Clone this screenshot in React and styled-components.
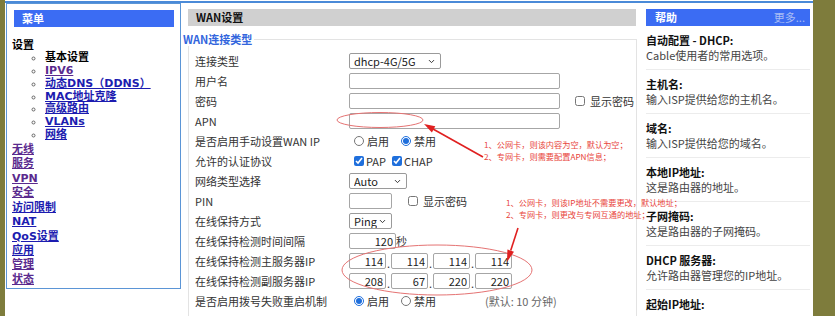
import React from "react";
import styled, { createGlobalStyle } from "styled-components";
import { ChevronDown } from "lucide-react";

const Global = createGlobalStyle`
  html, body { margin: 0; padding: 0; }
  body {
    background: #7e7c3c;
    overflow: hidden;
    font-family: "Noto Sans CJK SC", "Noto Sans", sans-serif;
  }
`;

const Page = styled.div`
  position: relative;
  width: 808px;
  height: 316px;
  margin-left: 5px;
  background: linear-gradient(#fff 0 1px, #4a8ad8 1px 3px, #fff 3px);
  display: flex;
  align-items: flex-start;
`;

const MenuBox = styled.div`
  box-sizing: border-box;
  width: 175px;
  height: 286px;
  margin: 3px 0 0 1px;
  border: 1px solid #5b95d6;
  padding: 6px 6px 0 5px;
`;

const PanelHeader = styled.div`
  height: 17px;
  line-height: 17px;
  background: ${(p) => p.$bg || "#3b6cf3"};
  color: ${(p) => p.$color || "#fff"};
  font-size: 11px;
  font-weight: bold;
  padding: 0 ${(p) => p.$padR || 0}px 0 ${(p) => p.$padL || 8}px;
  margin-left: ${(p) => p.$ml || 0}px;
  width: ${(p) => (p.$w ? `${p.$w}px` : "auto")};
  display: flex;
  justify-content: space-between;
`;

const MoreLink = styled.span`
  font-weight: normal;
  color: #a9bdf3;
  font-size: 11px;
`;

const MenuHeading = styled.div`
  margin-top: 12px;
  font-family: "DejaVu Sans", "Noto Sans CJK SC", sans-serif;
  font-weight: bold;
  font-size: 11px;
  line-height: 13px;
  color: #000;
`;

const SubList = styled.ul`
  margin: 0;
  padding: 0 0 0 33px;
  list-style: circle;
  font-family: "DejaVu Sans", "Noto Sans CJK SC", sans-serif;
  font-weight: bold;
  font-size: 11px;
  line-height: 12.85px;
  li::marker { color: #666; }
`;

const TopList = styled.div`
  display: flex;
  flex-direction: column;
  align-items: flex-start;
  margin-top: 1px;
  font-family: "DejaVu Sans", "Noto Sans CJK SC", sans-serif;
  font-weight: bold;
  font-size: 11px;
  line-height: 14.44px;
`;

const MenuLink = styled.a`
  color: ${(p) => (p.$current ? "#000" : p.$visited ? "#5a2a8e" : "#1c1cb0")};
  text-decoration: ${(p) => (p.$current ? "none" : "underline")};
`;

const Main = styled.div`
  width: 455px;
  margin-left: 1px;
  padding-top: 9px;
`;

const Fieldset = styled.fieldset`
  box-sizing: border-box;
  width: 449px;
  margin: 6px 0 0 6px;
  border: 1px solid #e3e3e3;
  padding: 5px 0 12px 6px;
  min-width: 0;
`;

const Legend = styled.legend`
  margin-left: -14px;
  padding: 0 2px;
  font-size: 11px;
  line-height: 14px;
  font-weight: bold;
  color: #3366dd;
`;

const Row = styled.div`
  display: grid;
  grid-template-columns: 154px auto;
  align-items: center;
  height: 20px;
  font-size: 11px;
  color: #333;
`;

const Controls = styled.div`
  display: flex;
  align-items: center;
`;

const SelectWrap = styled.span`
  position: relative;
  display: inline-flex;
  width: ${(p) => p.$w}px;
  height: 16px;
`;

const Select = styled.select`
  appearance: none;
  -webkit-appearance: none;
  box-sizing: border-box;
  width: 100%;
  height: 16px;
  font-size: 11px;
  line-height: 14px;
  font-family: "Noto Sans CJK SC", "Noto Sans", sans-serif;
  border: 1px solid #9a9a9a;
  border-radius: 2px;
  padding: 0 14px 0 4px;
  background: #fff;
  color: #222;
  outline: none;
`;

const Chevron = styled(ChevronDown)`
  position: absolute;
  right: 5px;
  top: 4px;
  pointer-events: none;
  color: #333;
`;

const TextInput = styled.input`
  box-sizing: border-box;
  width: ${(p) => p.$w}px;
  height: 16px;
  border: 1px solid #a6a6a6;
  border-radius: 2px;
  padding: 0 2px;
  font-size: 11px;
  font-family: "Noto Sans CJK SC", "Noto Sans", sans-serif;
  text-align: ${(p) => (p.$right ? "right" : "left")};
  color: #222;
  outline: none;
`;

const Check = styled.input`
  width: 10px;
  height: 10px;
  margin: 0 ${(p) => p.$mr ?? 3}px 0 ${(p) => p.$ml ?? 0}px;
  accent-color: #1f6fdc;
`;

const OptText = styled.span`
  color: #333;
  font-size: 11px;
  margin-right: ${(p) => p.$mr || 0}px;
`;

const Dot = styled.span`
  width: 5px;
  text-align: center;
  font-size: 11px;
  align-self: flex-end;
  line-height: 12px;
`;

const Hint = styled.span`
  color: #666;
  font-size: 11px;
  margin-left: ${(p) => p.$ml}px;
`;

const Help = styled.div`
  width: 164px;
  margin-left: 9px;
  padding-top: 9px;
`;

const HelpItem = styled.div`
  padding: 7px 0 6px;
  border-bottom: 1px solid #ececec;
  font-size: 11px;
  line-height: 15px;
`;

const HelpTitle = styled.div`
  font-weight: bold;
  color: #111;
`;

const HelpText = styled.div`
  color: #444;
`;

const Note = styled.div`
  position: absolute;
  left: ${(p) => p.$x}px;
  top: ${(p) => p.$y}px;
  color: #e8453c;
  font-size: 8.2px;
  line-height: 12px;
  white-space: nowrap;
`;

const Overlay = styled.svg`
  position: absolute;
  left: 0;
  top: 0;
  pointer-events: none;
`;

const subItems = [
  { t: "基本设置", current: true },
  { t: "IPV6", visited: true },
  { t: "动态DNS（DDNS）" },
  { t: "MAC地址克隆" },
  { t: "高级路由" },
  { t: "VLANs" },
  { t: "网络" },
];

const topItems = [
  { t: "无线", visited: true },
  { t: "服务", visited: true },
  { t: "VPN", visited: true },
  { t: "安全", visited: true },
  { t: "访问限制" },
  { t: "NAT" },
  { t: "QoS设置" },
  { t: "应用" },
  { t: "管理", visited: true },
  { t: "状态", visited: true },
];

const helpItems = [
  ["自动配置 - DHCP:", "Cable使用者的常用选项。"],
  ["主机名:", "输入ISP提供给您的主机名。"],
  ["域名:", "输入ISP提供给您的域名。"],
  ["本地IP地址:", "这是路由器的地址。"],
  ["子网掩码:", "这是路由器的子网掩码。"],
  ["DHCP 服务器:", "允许路由器管理您的IP地址。"],
  ["起始IP地址:", ""],
];

function Dropdown({ w, label }) {
  return (
    <SelectWrap $w={w}>
      <Select defaultValue="v">
        <option value="v">{label}</option>
      </Select>
      <Chevron size={9} strokeWidth={2.6} />
    </SelectWrap>
  );
}

function IpGroup({ values }) {
  return (
    <Controls>
      {values.map((v, i) => (
        <React.Fragment key={i}>
          {i > 0 && <Dot>.</Dot>}
          <TextInput $w={37} $right defaultValue={v} />
        </React.Fragment>
      ))}
    </Controls>
  );
}

export default function App() {
  return (
    <>
      <Global />
      <Page>
        <MenuBox>
          <PanelHeader $ml={2}>菜单</PanelHeader>
          <MenuHeading>设置</MenuHeading>
          <SubList>
            {subItems.map((it) => (
              <li key={it.t}>
                <MenuLink href="#" $current={it.current} $visited={it.visited}>
                  {it.t}
                </MenuLink>
              </li>
            ))}
          </SubList>
          <TopList>
            {topItems.map((it) => (
              <MenuLink key={it.t} href="#" $visited={it.visited}>
                {it.t}
              </MenuLink>
            ))}
          </TopList>
        </MenuBox>

        <Main>
          <PanelHeader $bg="#d0d0d0" $color="#111" $ml={6} $w={440}>
            WAN设置
          </PanelHeader>
          <Fieldset>
            <Legend>WAN连接类型</Legend>
            <Row>
              <span>连接类型</span>
              <Controls>
                <Dropdown w={92} label="dhcp-4G/5G" />
              </Controls>
            </Row>
            <Row>
              <span>用户名</span>
              <Controls>
                <TextInput $w={211} />
              </Controls>
            </Row>
            <Row>
              <span>密码</span>
              <Controls>
                <TextInput $w={211} type="password" />
                <Check type="checkbox" $ml={15} $mr={5} />
                <OptText>显示密码</OptText>
              </Controls>
            </Row>
            <Row>
              <span>APN</span>
              <Controls>
                <TextInput $w={211} />
              </Controls>
            </Row>
            <Row>
              <span>是否启用手动设置WAN IP</span>
              <Controls>
                <Check type="radio" name="wanip" $ml={5} />
                <OptText $mr={12}>启用</OptText>
                <Check type="radio" name="wanip" defaultChecked />
                <OptText>禁用</OptText>
              </Controls>
            </Row>
            <Row>
              <span>允许的认证协议</span>
              <Controls>
                <Check type="checkbox" defaultChecked $ml={5} $mr={2} />
                <OptText $mr={6}>PAP</OptText>
                <Check type="checkbox" defaultChecked $mr={2} />
                <OptText>CHAP</OptText>
              </Controls>
            </Row>
            <Row>
              <span>网络类型选择</span>
              <Controls>
                <Dropdown w={58} label="Auto" />
              </Controls>
            </Row>
            <Row>
              <span>PIN</span>
              <Controls>
                <TextInput $w={43} type="password" />
                <Check type="checkbox" $ml={16} $mr={5} />
                <OptText>显示密码</OptText>
              </Controls>
            </Row>
            <Row>
              <span>在线保持方式</span>
              <Controls>
                <Dropdown w={43} label="Ping" />
              </Controls>
            </Row>
            <Row>
              <span>在线保持检测时间间隔</span>
              <Controls>
                <TextInput $w={47} $right defaultValue="120" />
                <OptText>秒</OptText>
              </Controls>
            </Row>
            <Row>
              <span>在线保持检测主服务器IP</span>
              <IpGroup values={["114", "114", "114", "114"]} />
            </Row>
            <Row>
              <span>在线保持检测副服务器IP</span>
              <IpGroup values={["208", "67", "220", "220"]} />
            </Row>
            <Row>
              <span>是否启用拨号失败重启机制</span>
              <Controls>
                <Check type="radio" name="redial" defaultChecked $ml={5} />
                <OptText $mr={12}>启用</OptText>
                <Check type="radio" name="redial" />
                <OptText>禁用</OptText>
                <Hint $ml={49}>(默认: 10 分钟)</Hint>
              </Controls>
            </Row>
          </Fieldset>
        </Main>

        <Help>
          <PanelHeader $padL={9} $padR={5}>
            <span>帮助</span>
            <MoreLink>更多...</MoreLink>
          </PanelHeader>
          {helpItems.map(([t, d]) => (
            <HelpItem key={t}>
              <HelpTitle>{t}</HelpTitle>
              <HelpText>{d}</HelpText>
            </HelpItem>
          ))}
        </Help>

        <Note $x={479} $y={138}>
          1、公网卡，则该内容为空，默认为空；
          <br />
          2、专网卡，则需要配置APN信息；
        </Note>
        <Note $x={501} $y={196}>
          1、公网卡，则该IP地址不需要更改，默认地址；
          <br />
          2、专网卡，则更改与专网互通的地址；
        </Note>

        <Overlay width="808" height="316" viewBox="0 0 808 316">
          <ellipse cx="375" cy="120" rx="43" ry="7.5" fill="none" stroke="#e57373" strokeWidth="1" />
          <ellipse cx="432" cy="270" rx="95" ry="25" fill="none" stroke="#e57373" strokeWidth="1" />
          <line x1="478" y1="157" x2="428" y2="129" stroke="#e02020" strokeWidth="1.6" />
          <polygon points="419,124 430.3,126.3 426.9,132.5" fill="#e02020" />
          <line x1="513" y1="228" x2="505.7" y2="250.6" stroke="#e02020" strokeWidth="1.6" />
          <polygon points="502,262 509,251.7 502.4,249.5" fill="#e02020" />
        </Overlay>
      </Page>
    </>
  );
}
